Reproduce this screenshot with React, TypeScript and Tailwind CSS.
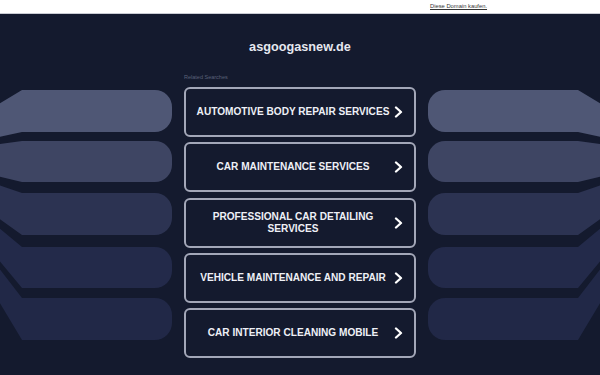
import React from "react";

const items: string[][] = [
  ["AUTOMOTIVE BODY REPAIR SERVICES"],
  ["CAR MAINTENANCE SERVICES"],
  ["PROFESSIONAL CAR DETAILING", "SERVICES"],
  ["VEHICLE MAINTENANCE AND REPAIR"],
  ["CAR INTERIOR CLEANING MOBILE"],
];

const stripes = [
  { t: 90, b: 132, c: "#4f5775" },
  { t: 141, b: 182, c: "#3e4563" },
  { t: 193, b: 235, c: "#2c3352" },
  { t: 247, b: 288, c: "#232a4a" },
  { t: 298, b: 340, c: "#212847" },
];

function proj(y: number) {
  return y + 0.2 * (156 - y);
}

function leftPath(t: number, b: number) {
  const r = 17;
  const e = 172;
  return `M0,${proj(t)} L22,${t} L${e - r},${t} A${r},${r} 0 0 1 ${e},${t + r} L${e},${b - r} A${r},${r} 0 0 1 ${e - r},${b} L22,${b} L0,${proj(b)} Z`;
}

function rightPath(t: number, b: number) {
  const r = 17;
  const s = 428;
  return `M600,${proj(t)} L578,${t} L${s + r},${t} A${r},${r} 0 0 0 ${s},${t + r} L${s},${b - r} A${r},${r} 0 0 0 ${s + r},${b} L578,${b} L600,${proj(b)} Z`;
}

function Chevron() {
  return (
    <svg width="9" height="12" viewBox="0 0 9 12" className="shrink-0">
      <polyline
        points="2,1.5 7,6 2,10.5"
        fill="none"
        stroke="#ffffff"
        strokeWidth="2.3"
        strokeLinecap="round"
        strokeLinejoin="round"
      />
    </svg>
  );
}

export default function App() {
  return (
    <div
      className="relative w-full h-[375px] overflow-hidden bg-[#141a2e]"
      style={{ fontFamily: '"Liberation Sans", Arial, sans-serif' }}
    >
      <svg
        className="absolute left-0 top-0 w-full h-full"
        viewBox="0 0 600 375"
        preserveAspectRatio="none"
      >
        {stripes.map((s, i) => (
          <g key={i}>
            <path d={leftPath(s.t, s.b)} fill={s.c} />
            <path d={rightPath(s.t, s.b)} fill={s.c} />
          </g>
        ))}
      </svg>

      <div className="relative flex flex-col h-full">
        <div className="h-[14px] bg-white border-b border-[#c9cbd3] flex items-center">
          <a className="ml-[430px] text-[5.8px] leading-none text-[#333] underline">
            Diese Domain kaufen.
          </a>
        </div>

        <div className="flex flex-col items-center">
          <h1 className="mt-[25px] text-[12.7px] leading-[16px] font-bold text-[#e6e8f0]">
            asgoogasnew.de
          </h1>
          <div className="w-[232px] mt-[19px] text-[5.5px] leading-[6px] text-[#5b6179]">
            Related Searches
          </div>
          <div className="mt-[7px] flex flex-col gap-[5.25px]">
            {items.map((lines, i) => (
              <div
                key={i}
                className="w-[232px] h-[50px] border-2 border-[#a3a7b8] rounded-[6px] flex items-center pl-[10px] pr-[11px] gap-[4px]"
              >
                <div className="flex-1 text-center text-[10.1px] leading-[12px] font-bold text-[#eef0f6]">
                  {lines.map((l, j) => (
                    <div key={j}>{l}</div>
                  ))}
                </div>
                <Chevron />
              </div>
            ))}
          </div>
        </div>
      </div>
    </div>
  );
}
